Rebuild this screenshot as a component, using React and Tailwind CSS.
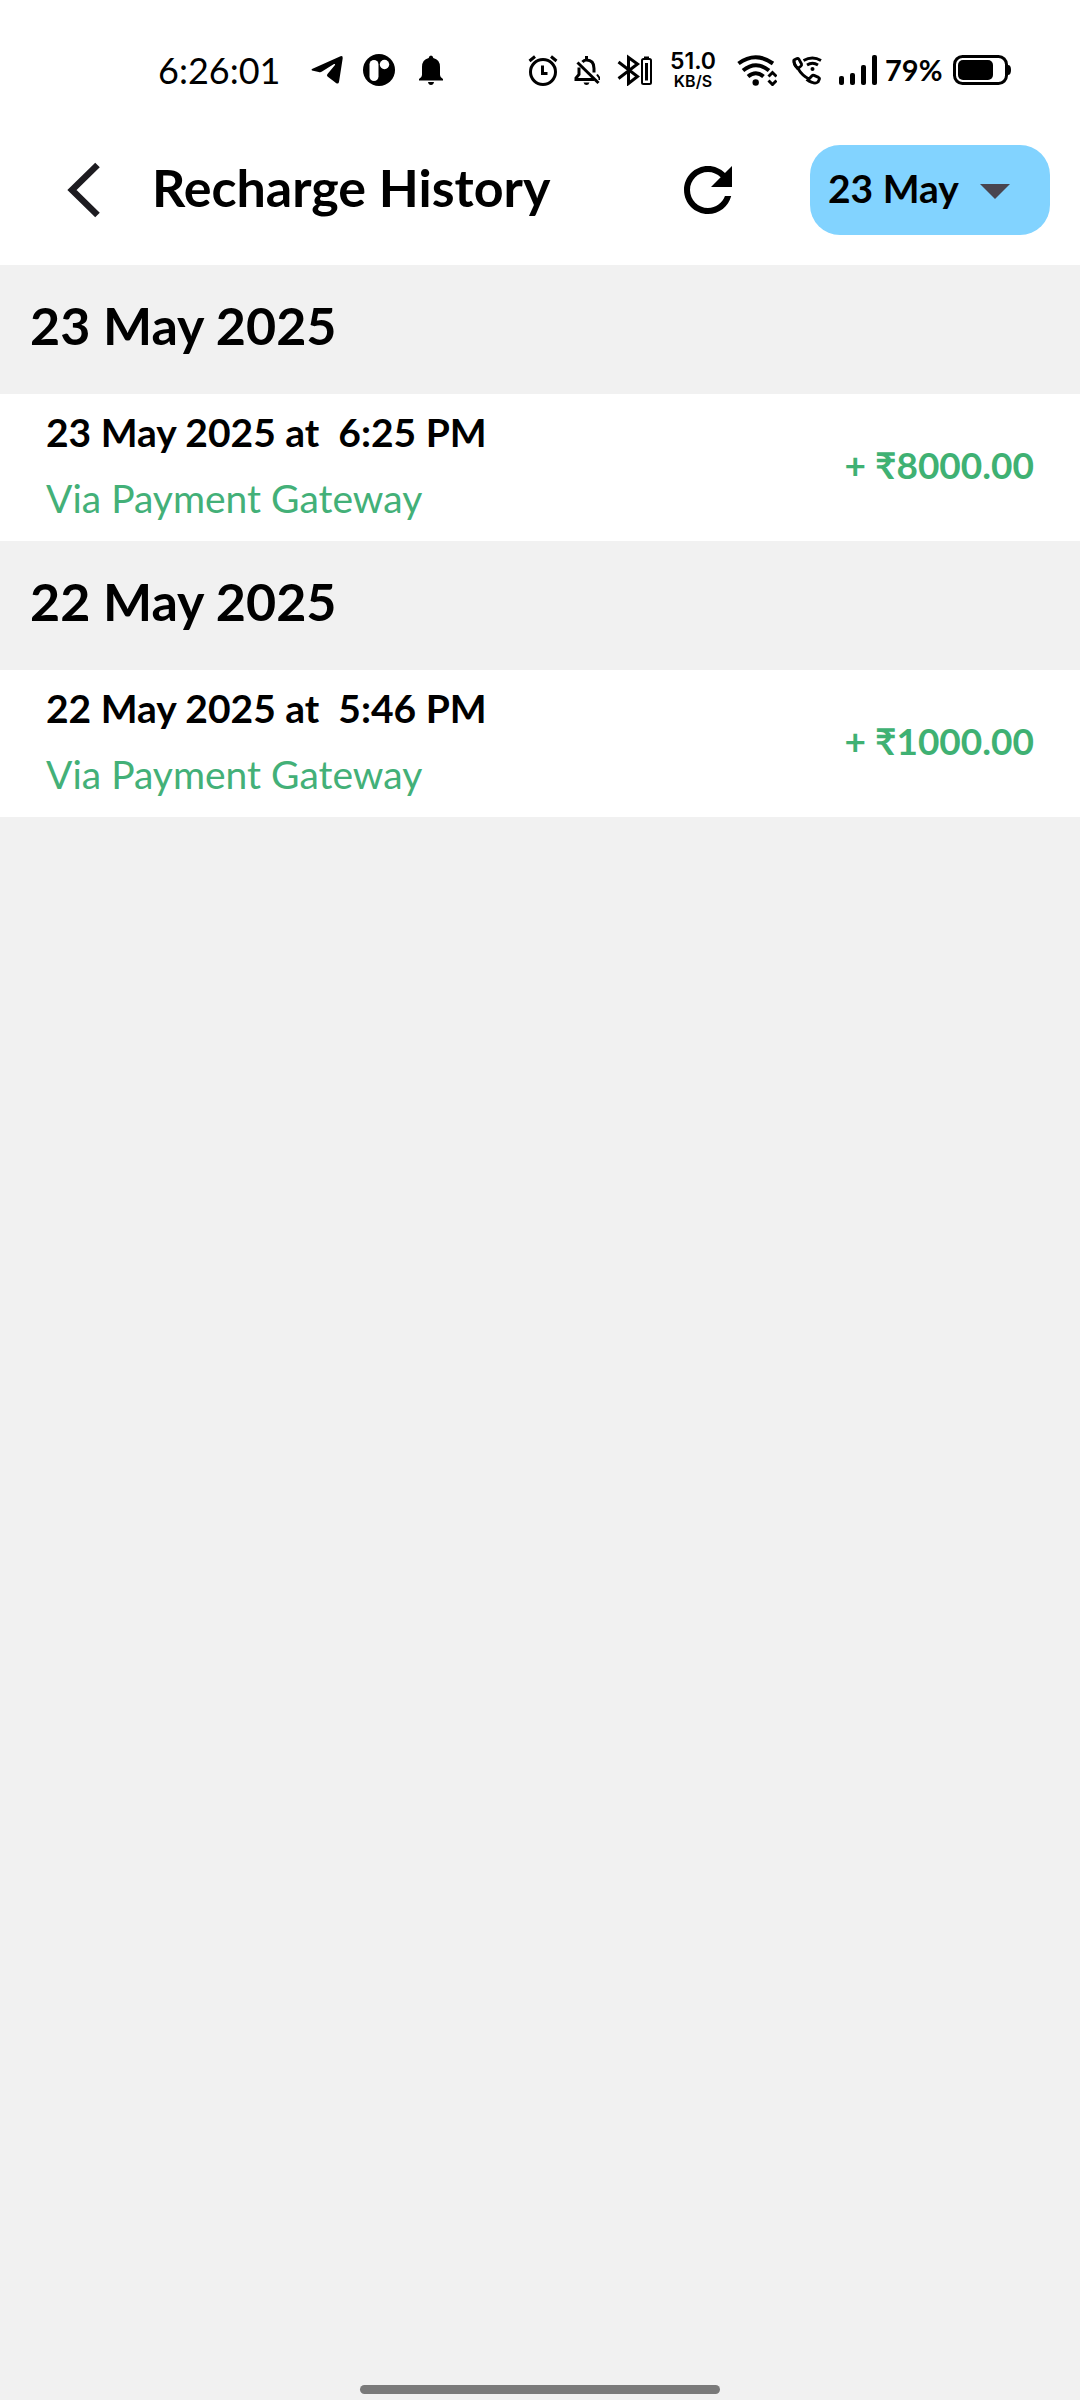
const groups = [
  {
    date: '23 May 2025',
    items: [{ when: '23 May 2025 at \u00a06:25 PM', via: 'Via Payment Gateway', amount: '+ ₹8000.00' }],
  },
  {
    date: '22 May 2025',
    items: [{ when: '22 May 2025 at \u00a05:46 PM', via: 'Via Payment Gateway', amount: '+ ₹1000.00' }],
  },
];

function TelegramIcon() {
  return (
    <svg className="h-8 w-8 shrink-0" viewBox="0 0 32 32" aria-hidden="true">
      <path
        d="M1 15 29.500 2.200q2.500-.8 2.200 2L28 28q-.7 2.500-3 1L16.500 22.500q-1.200-1.200 0-2.500L24 11q.5-1.500-1-1L11 17.500q-1.500 1-3.300.4L1 16.500q-1-.6 0-1.500Z"
        fill="black"
      />
    </svg>
  );
}

function BadgeIcon() {
  return (
    <svg className="ml-5 h-8 w-8 shrink-0" viewBox="0 0 32 32" aria-hidden="true">
      <circle cx="16" cy="16" r="16" fill="black" />
      <rect x="6.500" y="6" width="9" height="21" rx="4.500" fill="white" />
      <circle cx="21.500" cy="10.500" r="4.700" fill="white" />
    </svg>
  );
}

function BellIcon() {
  return (
    <svg className="ml-6 h-8 w-6 shrink-0" viewBox="0 0 24 32" aria-hidden="true">
      <path d="M12 1.500q2 0 2.300 2.500 6.700 1.500 6.700 9v8q0 2.500 3 4v1.500H0V25q3-1.500 3-4v-8q0-7.500 6.700-9Q10 1.500 12 1.500ZM9 28h6q-.5 3-3 3t-3-3Z" fill="black" />
    </svg>
  );
}

function AlarmIcon() {
  return (
    <svg className="h-8 w-[30px] shrink-0" viewBox="0 0 30 32" fill="none" stroke="black" aria-hidden="true">
      <circle cx="15" cy="18" r="12.500" strokeWidth="3" />
      <path d="M1.500 7 7 2.500M28.500 7 23 2.500" strokeWidth="3" />
      <path d="M14.500 11.500v8h5" strokeWidth="3" />
    </svg>
  );
}

function BellOffIcon() {
  return (
    <svg className="ml-4 h-8 w-[26px] shrink-0" viewBox="0 0 26 32" fill="none" stroke="black" strokeWidth="3" aria-hidden="true">
      <path d="M3.500 8.500 24.500 29" />
      <path d="M8.500 8Q10 6 12.500 6q7.500 0 7.500 8.500v4" />
      <path d="M5 13.500v7L2 24v1.500h18" />
      <path d="M23 20.500 25.500 24v2" strokeWidth="2" />
      <path d="M11 3.500h3" />
      <path d="M9.500 28.500h6q-.8 2.500-3 2.500t-3-2.500Z" fill="black" stroke="none" />
    </svg>
  );
}

function BluetoothIcon() {
  return (
    <svg className="ml-[17px] h-8 w-9 shrink-0" viewBox="0 0 36 32" fill="none" stroke="black" strokeWidth="3" aria-hidden="true">
      <path d="m1.500 8 19 14.500-9 7V3.500l9 6.500L1.500 24.500" />
      <rect x="25" y="5" width="9" height="25" rx="1.500" strokeWidth="2" />
      <path d="M27 3.500h5" strokeWidth="2" />
      <path d="M29.500 9v17.500" />
    </svg>
  );
}

function WifiIcon() {
  return (
    <svg className="ml-5 h-8 w-10 shrink-0" viewBox="0 0 40 32" fill="none" stroke="black" aria-hidden="true">
      <path d="M1.500 9.500q17-12.500 34.500 0" strokeWidth="4" />
      <path d="M6 16.500q13-10.500 26 0" strokeWidth="4" />
      <path d="M11 22.500q8-6.500 15.500 0" strokeWidth="4" />
      <circle cx="18.700" cy="28.500" r="3.200" fill="black" stroke="none" />
      <path d="m31.500 22.500 4-4 4 4M31.500 26.500l4 4 4-4" strokeWidth="3" />
    </svg>
  );
}

function WifiCallIcon() {
  return (
    <svg className="ml-[14px] h-8 w-8 shrink-0" viewBox="0 0 32 32" fill="none" stroke="black" strokeWidth="2.800" strokeLinejoin="round" aria-hidden="true">
      <path d="m3 6 3-1.500q1.200-.3 2 .8L10.500 10q.4 1.200-.5 2L7 14.500Q3 11 3 6Z" />
      <path d="M7 14.500q4 7 11 10.500l3-3.300q.7-.7 2-.3l4.500 2q1.500.8.8 2L27 28q-2.500 2-6 .3-3-1-5.500-3" />
      <path d="M3 6q-1 4 4 9" />
      <path d="M12.500 6.500q9-5 17.500 0M16 11q5.500-3.500 11 0" />
      <circle cx="21.500" cy="15" r="2" fill="black" stroke="none" />
    </svg>
  );
}

function SignalIcon() {
  return (
    <svg className="ml-4 h-8 w-[38px] shrink-0" viewBox="0 0 38 32" aria-hidden="true">
      <rect x="0" y="22" width="5" height="9" rx="2" />
      <rect x="11" y="19" width="5" height="12" rx="2" />
      <rect x="22" y="11" width="5" height="20" rx="2" />
      <rect x="33" y="1" width="5" height="30" rx="2" />
    </svg>
  );
}

function BatteryIcon() {
  return (
    <svg className="ml-[10px] h-8 w-[58px] shrink-0" viewBox="0 0 58 32" aria-hidden="true">
      <rect x="1.500" y="2.500" width="52" height="27" rx="8" fill="none" stroke="black" strokeWidth="3" />
      <rect x="5" y="6" width="35" height="20" rx="5" />
      <path d="M55 11q3 0 3 5t-3 5Z" />
    </svg>
  );
}

function StatusBar() {
  return (
    <div className="flex h-[115px] items-center bg-white pt-6 pr-[69px] pl-[158px]">
      <time className="w-[153px] text-[36px] leading-10">6:26:01</time>
      <div className="mr-auto flex items-center">
        <TelegramIcon />
        <BadgeIcon />
        <BellIcon />
      </div>
      <div className="flex items-center">
        <AlarmIcon />
        <BellOffIcon />
        <BluetoothIcon />
        <div className="ml-4 flex w-12 flex-col items-center font-['Inter',sans-serif] font-semibold">
          <span className="text-[23px] leading-[22px]">51.0</span>
          <span className="text-[16px] leading-[18px]">KB/S</span>
        </div>
        <WifiIcon />
        <WifiCallIcon />
        <SignalIcon />
        <span className="ml-2 w-[58px] text-[29px] leading-8 font-bold">79%</span>
        <BatteryIcon />
      </div>
    </div>
  );
}

function Header() {
  return (
    <header className="flex h-[150px] items-center bg-white pr-[30px] pl-12">
      <button type="button" aria-label="Back" className="flex size-[72px] items-center justify-center">
        <svg className="size-[72px]" viewBox="0 0 72 72" fill="none" stroke="#1d1b20" strokeWidth="6.500" aria-hidden="true">
          <path d="M49.500 11 24 36l25.500 25" />
        </svg>
      </button>
      <h1 className="ml-8 pb-[6px] text-[52px] leading-[60px] font-bold">Recharge History</h1>
      <button type="button" aria-label="Refresh" className="ml-auto">
        <svg className="size-[72px]" viewBox="0 0 24 24" aria-hidden="true">
          <path d="M17.65 6.35C16.2 4.9 14.21 4 12 4c-4.42 0-7.99 3.58-7.99 8s3.57 8 7.99 8c3.73 0 6.84-2.55 7.730-6h-2.080c-.82 2.330-3.040 4-5.650 4-3.310 0-6-2.690-6-6s2.690-6 6-6c1.660 0 3.140.69 4.220 1.780L13 11h7V4l-2.350 2.350z" />
        </svg>
      </button>
      <div className="relative ml-[66px] flex w-60">
        <select
          aria-label="Date"
          className="h-[90px] w-full appearance-none rounded-[30px] bg-[#82d3ff] pr-20 pb-1 pl-[18px] text-[39px] font-bold text-black"
        >
          <option>23 May</option>
          <option>22 May</option>
        </select>
        <svg className="pointer-events-none absolute top-[39px] right-10 h-[15px] w-[30px]" viewBox="0 0 30 15" aria-hidden="true">
          <path d="M0 0h30L15 15Z" fill="#49454f" />
        </svg>
      </div>
    </header>
  );
}

export default function App() {
  return (
    <div className="flex min-h-screen flex-col bg-[#f1f1f1] font-['Lato',sans-serif] text-black">
      <StatusBar />
      <Header />
      <main className="flex-1">
        {groups.map((group) => (
          <section key={group.date}>
            <h2 className="px-[30px] pt-8 pb-[41px] text-[52px] leading-[56px] font-bold">{group.date}</h2>
            <ul>
              {group.items.map((item) => (
                <li key={item.when} className="flex items-center justify-between bg-white px-[46px] pt-[5px] pb-[10px]">
                  <div className="leading-[66px]">
                    <p className="text-[39px] font-bold">{item.when}</p>
                    <p className="text-[39px] text-[#43b078]">{item.via}</p>
                  </div>
                  <p className="text-[37px] leading-[66px] font-bold text-[#3fb173]">{item.amount}</p>
                </li>
              ))}
            </ul>
          </section>
        ))}
      </main>
      <div className="flex justify-center pb-[6px]">
        <div className="h-[9px] w-1/3 rounded-full bg-[#7a7a7a]" />
      </div>
    </div>
  );
}
